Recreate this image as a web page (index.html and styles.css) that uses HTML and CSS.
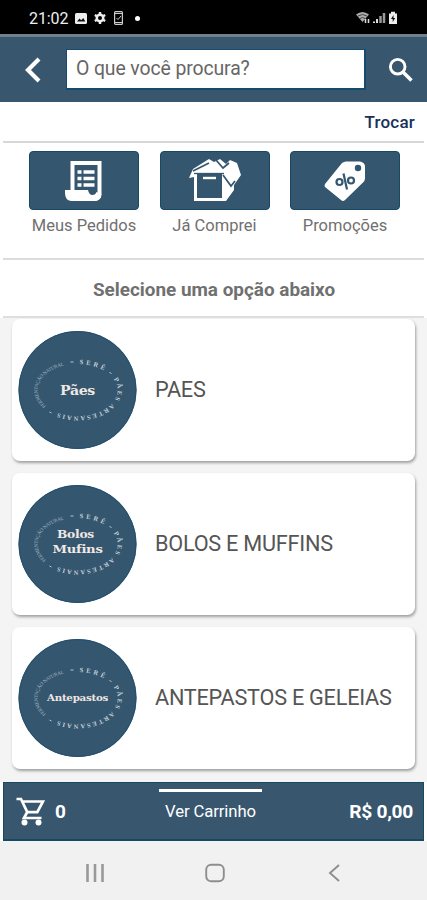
FILE: index.html
```
<!DOCTYPE html>
<html lang="pt-BR">
<head>
<meta charset="utf-8">
<title>Catálogo</title>
<link rel="stylesheet" href="styles.css">
</head>
<body>
<svg class="defs" width="0" height="0">
  <defs>
    <path id="arc-brand" d="M61 33A40 26 0 0 1 85.5 39.6"/>
    <path id="arc-product" d="M95.2 48A40 26 0 0 1 38.5 81.5"/>
    <path id="arc-slogan" d="M27.5 75A40 26 0 0 1 49 33.8"/>
    <g id="seal">
      <circle cx="59" cy="59" r="59" fill="#34566f"/>
      <circle cx="59" cy="59" r="58.5" fill="none" stroke="#22506e"/>
      <g class="ring">
        <text class="ring-bold"><textPath href="#arc-brand" textLength="25">SERÊ</textPath></text>
        <text class="ring-bold"><textPath href="#arc-product" textLength="84">PÃES ARTESANAIS</textPath></text>
        <text class="ring-thin"><textPath href="#arc-slogan" textLength="57">FERMENTAÇÃO NATURAL</textPath></text>
      </g>
      <path d="M52 31h3M91 41l2 2M31 81l2 1" stroke="#b9c6d1" stroke-width="1"/>
    </g>
  </defs>
</svg>
<div class="screen">
  <div class="status">
    <span class="clock">21:02</span>
    <svg width="12" height="11" viewBox="0 0 12 11"><rect width="12" height="11" rx="1.5" fill="#eee"/><path d="M2 8.5l2.5-3 1.7 1.8L8.300 5 10.300 8.500z" fill="#111"/></svg>
    <svg class="gear" width="12" height="12" viewBox="0 0 12 12"><path d="M6 0v12M.8 3l10.400 6M.8 9l10.400-6" stroke="#eee" stroke-width="2.400"/><circle cx="6" cy="6" r="3.300" fill="none" stroke="#eee" stroke-width="2.400"/><circle cx="6" cy="6" r="2" fill="#000"/></svg>
    <svg class="phone" width="9" height="14" viewBox="0 0 9 14"><rect x=".6" y=".6" width="7.800" height="12.800" rx="1" fill="none" stroke="#ccc" stroke-width="1.200"/><path d="M1 2.500h7M1 11.500h7" stroke="#ccc"/><path d="M2.500 7l1.500 1.500L7 5" fill="none" stroke="#ccc"/></svg>
    <span class="dot"></span>
    <svg class="signals" width="43" height="14" viewBox="0 0 43 14"><path d="M0 3.500Q6.500-1.500 13 3.500L6.500 11z" fill="#aaa"/><path d="M2 5q4.500-3 9 0M4 7.500q2.500-2 5 0" stroke="#444" fill="none"/><path d="M9.500 8v4M12.500 8v4" stroke="#ddd" stroke-width="1.500"/><path d="M18 10.500v1.500M21 8v4" stroke="#ddd" stroke-width="2"/><path d="M24.500 5v7M28 2v10" stroke="#999" stroke-width="2.500"/><path d="M33 2.500h2V.8h4v1.700h2V13h-8z" fill="#eee"/><path d="M37.500 4l-2.500 4h1.700v3l2.500-4h-1.700z" fill="#111"/></svg>
  </div>
  <header class="topbar">
    <svg class="back" width="18" height="28" viewBox="0 0 18 28"><path d="M15 3L4 14l11 11" fill="none" stroke="#fff" stroke-width="4.200"/></svg>
    <div class="search">O que você procura?</div>
    <svg class="lens" width="26" height="26" viewBox="0 0 26 26"><circle cx="9.700" cy="9.700" r="7.300" fill="none" stroke="#fff" stroke-width="2.900"/><path d="M15 15l8.500 8.500" stroke="#fff" stroke-width="3.600"/></svg>
  </header>
  <div class="switch">Trocar</div>
  <nav class="shortcuts">
    <div class="shortcut">
      <div class="tile"><svg width="42" height="44" viewBox="0 0 42 44"><path d="M9.500 32V4h27v31q0 5-5 5H8" fill="none" stroke="#fff" stroke-width="4"/><path d="M2 31h23q1 5 4.500 5 3 0 4-3l5 2q-1 7-7 7H8q-6-1-6-8z" fill="#fff"/><path d="M14.500 13h4M14.500 19.500h4M14.500 26h4M20.500 13h11M20.500 19.500h11M20.500 26h11" stroke="#fff" stroke-width="3.600"/></svg></div>
      <span>Meus Pedidos</span>
    </div>
    <div class="shortcut">
      <div class="tile"><svg width="52" height="46" viewBox="0 0 52 46"><path d="M0 20L4 11 20 1l5 3 6-3 6 5 4-4 7 3 4 12-7 10v5l-8 11H5V19z" fill="#fff"/><path d="M8 16h25v24H8z" fill="#34566f"/><path d="M5 15.500h30" stroke="#34566f" stroke-width="1.300"/><path d="M14 20h13" stroke="#fff" stroke-width="2.400"/><path d="M4 13L20 5M27 2l7 8 6-5M34 17l8 11 4-5" fill="none" stroke="#34566f" stroke-width="1.700"/></svg></div>
      <span>Já Comprei</span>
    </div>
    <div class="shortcut">
      <div class="tile"><svg width="42" height="42" viewBox="0 0 42 42"><path d="M22 1.500h14q5 1 5 5v12q0 2-2 4L21 40q-2 2-4 0L1 27q-1-1 0-3L18 3q2-1.500 4-1.500z" fill="#fff"/><circle cx="34" cy="8" r="3.200" fill="#34566f"/><g fill="none" stroke="#34566f" stroke-width="2.200"><circle cx="15.500" cy="22" r="3"/><circle cx="27" cy="20.500" r="3"/><path d="M19.500 13.500l3.500 16"/></g></svg></div>
      <span>Promoções</span>
    </div>
  </nav>
  <h1 class="heading">Selecione uma opção abaixo</h1>
  <main class="list">
    <article class="card">
      <svg class="logo" width="119" height="118" viewBox="0 0 118 118"><use href="#seal"/><text class="seal-name" x="59" y="64" textLength="35" lengthAdjust="spacingAndGlyphs" font-size="12">Pães</text></svg>
      <span>PAES</span>
    </article>
    <article class="card">
      <svg class="logo" width="119" height="118" viewBox="0 0 118 118"><use href="#seal"/><text class="seal-name" x="57" y="53" textLength="37" lengthAdjust="spacingAndGlyphs" font-size="11.500">Bolos</text><text class="seal-name" x="59" y="68" textLength="50" lengthAdjust="spacingAndGlyphs" font-size="11.500">Mufins</text></svg>
      <span>BOLOS E MUFFINS</span>
    </article>
    <article class="card">
      <svg class="logo" width="119" height="118" viewBox="0 0 118 118"><use href="#seal"/><text class="seal-name" x="59" y="62" textLength="61" lengthAdjust="spacingAndGlyphs" font-size="9">Antepastos</text></svg>
      <span>ANTEPASTOS E GELEIAS</span>
    </article>
  </main>
  <footer class="cart">
    <div class="count"><svg width="29" height="29" viewBox="0 0 29 29"><path d="M.5 2h4.500l6.300 13.200h10L27 4.500H6M11 15.500l-3 5.500H25.500" fill="none" stroke="#fff" stroke-width="2.700"/><circle cx="8.500" cy="25.500" r="3" fill="#fff"/><circle cx="22.500" cy="25.500" r="3" fill="#fff"/></svg><b>0</b></div>
    <div class="open">Ver Carrinho</div>
    <b class="total">R$ 0,00</b>
  </footer>
  <div class="system">
    <svg width="20" height="20" viewBox="0 0 20 20"><path d="M2.500 1v18M10 1v18M17.500 1v18" stroke="#999" stroke-width="2.600"/></svg>
    <svg width="20" height="20" viewBox="0 0 20 20"><rect x="1.200" y="1.700" width="17.600" height="16.600" rx="5" fill="none" stroke="#8e8e8e" stroke-width="1.900"/></svg>
    <svg width="20" height="20" viewBox="0 0 20 20"><path d="M14 2L5 10l9 8" fill="none" stroke="#8e8e8e" stroke-width="1.900"/></svg>
  </div>
</div>
</body>
</html>
```
FILE: styles.css
```
* { box-sizing: border-box; }
body { margin: 0; background: #fff; font-family: Roboto, "Liberation Sans", sans-serif; }
svg { display: block; flex: none; }
.defs { position: absolute; }
.screen { width: 427px; height: 900px; display: flex; flex-direction: column; overflow: hidden; }

.status { height: 34px; flex: none; background: #000; color: #eee; display: flex; align-items: center; padding: 2px 28px 0 29px; }
.clock { font-size: 16px; width: 46px; white-space: nowrap; letter-spacing: -.1px; }
.gear { margin-left: 7px; }
.phone { margin-left: 8px; }
.dot { width: 5px; height: 5px; border-radius: 50%; background: #fff; margin-left: 12px; }
.signals { margin-left: auto; }

.topbar { height: 68px; flex: none; background: #38566e; border-top: 3px solid #6f818c; display: flex; align-items: center; padding: 0 13px 0 24px; }
.back { margin-top: 1px; }
.search { width: 300px; height: 41px; margin-left: 24px; border: 1px solid #164b6d; border-width: 1px 2px 2px 1px; background: #fff; color: #666; font-size: 19.4px; line-height: 38px; padding-left: 9px; letter-spacing: -.1px; margin-top: -1px; }
.lens { margin-left: auto; }

.switch { height: 41px; flex: none; margin: 0 3px; border-bottom: 2px solid #d5d8d8; display: flex; align-items: center; justify-content: flex-end; padding: 0 9px 0 0; color: #17315b; font-size: 17px; font-weight: 500; letter-spacing: .2px; }

.shortcuts { height: 117px; flex: none; margin: 0 3px; padding: 8px 24px 0 26px; border-bottom: 2px solid #dadddd; display: flex; justify-content: space-between; }
.shortcut { width: 110px; display: flex; flex-direction: column; align-items: center; color: #707070; font-size: 16.5px; letter-spacing: 0; white-space: nowrap; }
.tile { width: 110px; height: 59px; border-radius: 4px; border: 1px solid #174864; background: #34566f; display: flex; align-items: center; justify-content: center; margin-bottom: 6px; }

.heading { height: 58px; flex: none; margin: 0 3px; border-bottom: 2px solid #dedede; display: flex; align-items: center; justify-content: center; color: #707070; font-size: 18.9px; font-weight: 700; padding: 2px 0 0 1px; }

.list { height: 464px; flex: none; background: #f4f4f4; display: flex; flex-direction: column; gap: 12px; padding: 1px 12px 0; }
.card { width: 403px; height: 142px; flex: none; border-radius: 8px; background: #fff; box-shadow: 1px 2px 3px rgba(0,0,0,.35); display: flex; align-items: center; padding-left: 6px; color: #555; font-size: 21.7px; letter-spacing: -.25px; }
.card span { margin: -1px 0 0 18px; white-space: nowrap; }

.ring { font-family: "Liberation Serif", serif; fill: #c5cfd7; }
.ring-bold { font-size: 6.5px; font-weight: 700; }
.ring-thin { font-size: 5px; fill: #a4b5c2; }
.seal-name { font-family: "DejaVu Serif", serif; font-weight: 700; fill: #f1e7e3; text-anchor: middle; }

.cart { height: 59px; flex: none; margin: 0 3px; background: #38566e; border: 1px solid #164a63; border-width: 1px 1px 2px; color: #fff; display: grid; grid-template-columns: 155px 103px 1fr; }
.count { display: flex; align-items: center; padding-left: 12px; gap: 10px; font-size: 19px; }
.open { border-top: 3px solid #fff; margin-top: 6px; text-align: center; font-size: 16.7px; line-height: 40px; white-space: nowrap; letter-spacing: -.1px; }
.total { align-self: center; text-align: right; padding-right: 10px; font-size: 19.2px; letter-spacing: -.3px; }

.system { flex: 1; background: #f1f1f1; display: flex; align-items: center; justify-content: space-between; padding: 4px 82px 0 85px; }
```
